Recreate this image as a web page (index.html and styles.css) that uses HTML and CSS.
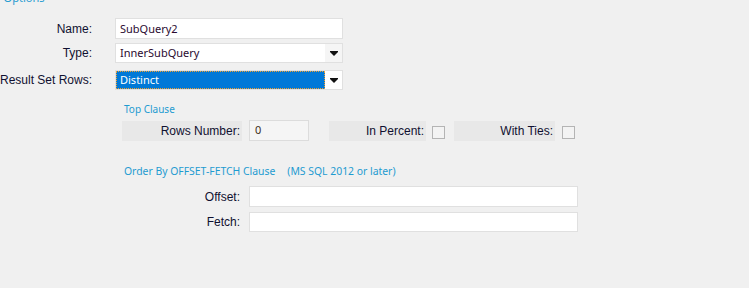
FILE: index.html
```html
<!DOCTYPE html>
<html>
<head>
<meta charset="utf-8">
<link rel="stylesheet" href="styles.css">
</head>
<body>
<div class="page">
  <div class="cut-title">Query Options</div>
  <div class="form">
    <div class="row r-name">
      <label class="lbl">Name:</label>
      <div class="field text">SubQuery2</div>
    </div>
    <div class="row r-type">
      <label class="lbl">Type:</label>
      <div class="field combo">
        <span class="value">InnerSubQuery</span>
        <span class="btn gray"><i class="arrow"></i></span>
      </div>
    </div>
    <div class="row r-rows">
      <label class="lbl">Result Set Rows:</label>
      <div class="field combo">
        <span class="value selected">Distinct</span>
        <span class="btn"><i class="arrow"></i></span>
      </div>
    </div>
  </div>

  <div class="section top-clause">
    <div class="heading">Top Clause</div>
    <div class="top-row">
      <span class="box-label w-rows">Rows Number:</span>
      <span class="num-input">0</span>
      <span class="box-label w-pct">In Percent:</span>
      <span class="check"></span>
      <span class="box-label w-ties">With Ties:</span>
      <span class="check"></span>
    </div>
  </div>

  <div class="section order-clause">
    <div class="heading wide">Order By OFFSET-FETCH Clause<span class="note">(MS SQL 2012 or later)</span></div>
    <div class="of-row r-offset">
      <label class="of-lbl">Offset:</label>
      <div class="of-input"></div>
    </div>
    <div class="of-row r-fetch">
      <label class="of-lbl">Fetch:</label>
      <div class="of-input"></div>
    </div>
  </div>
</div>
</body>
</html>
```

FILE: styles.css
```css
html, body {
  margin: 0;
  padding: 0;
  background: #f0f0f0;
  width: 749px;
  height: 288px;
  overflow: hidden;
}
body {
  font-family: "Liberation Sans", Arial, sans-serif;
  font-size: 12px;
  color: #101030;
}
.page {
  display: flex;
  flex-direction: column;
}
.cut-title {
  font-family: "Noto Sans", sans-serif;
  font-size: 11px;
  color: #1e9bd0;
  height: 14px;
  line-height: 14px;
  margin-top: -9px;
  margin-left: -31px;
  white-space: nowrap;
}
.form {
  display: flex;
  flex-direction: column;
  margin-top: 13px;
}
.row {
  display: flex;
  align-items: center;
}
.r-name { height: 21px; }
.r-type { height: 20px; margin-top: 4px; }
.r-rows { height: 20px; margin-top: 7px; }
.lbl {
  flex: 0 0 92px;
  width: 92px;
  text-align: right;
  margin-right: 23px;
  white-space: nowrap;
}
.field {
  box-sizing: border-box;
  flex: 0 0 228px;
  width: 228px;
  height: 100%;
  background: #fff;
  border: 1px solid #e0e0e0;
  font-family: "Noto Sans", sans-serif;
  font-size: 11px;
  color: #2a0a30;
}
.text {
  padding-left: 4px;
  line-height: 19px;
}
.combo {
  display: flex;
  align-items: stretch;
}
.value {
  flex: 1;
  padding-left: 4px;
  line-height: 18px;
}
.selected {
  background: #0078d7;
  color: #fff;
  outline: 1px dotted #f0a030;
  outline-offset: -1px;
  border: 1px dotted #202020;
  line-height: 16px;
  padding-left: 3px;
}
.btn {
  width: 17px;
  display: flex;
  align-items: center;
  justify-content: center;
}
.btn.gray { background: #f5f5f5; }
.arrow {
  width: 0;
  height: 0;
  border-left: 4px solid transparent;
  border-right: 4px solid transparent;
  border-top: 4px solid #111;
  position: relative;
  top: 1px;
}
.arrow::before {
  content: "";
  position: absolute;
  left: -4px;
  top: -5px;
  width: 8px;
  height: 1px;
  background: #111;
}

.section {
  display: flex;
  flex-direction: column;
  padding-left: 122px;
}
.heading {
  font-family: "Noto Sans", sans-serif;
  font-size: 10px;
  color: #1e9bd0;
  padding-left: 2px;
  height: 14px;
  line-height: 14px;
  white-space: nowrap;
}
.heading.wide { font-size: 10.4px; }
.top-clause { margin-top: 12px; }
.top-clause .heading { margin-bottom: 4px; }
.top-row {
  display: flex;
  align-items: center;
  height: 21px;
}
.box-label {
  box-sizing: border-box;
  height: 20px;
  line-height: 20px;
  background: #e8e8e8;
  text-align: right;
  padding-right: 2px;
  white-space: nowrap;
}
.w-rows { width: 120px; margin-right: 7px; }
.w-pct { width: 97px; margin-left: 20px; margin-right: 6px; }
.w-ties { width: 101px; margin-left: 9px; margin-right: 7px; }
.num-input {
  box-sizing: border-box;
  width: 60px;
  height: 21px;
  background: #f5f5f5;
  border: 1px solid #dcdcdc;
  font-family: "Noto Sans", sans-serif;
  font-size: 11px;
  padding-left: 5px;
  line-height: 17px;
  color: #403020;
}
.check {
  box-sizing: border-box;
  width: 13px;
  height: 13px;
  border: 1px solid #b4b4b4;
  background: #f3f3f3;
  margin-top: 4px;
}
.order-clause { margin-top: 23px; }
.order-clause .heading { margin-bottom: 8px; }
.note { margin-left: 12px; }
.of-row {
  display: flex;
  align-items: center;
  height: 21px;
}
.r-fetch { margin-top: 5px; height: 20px; }
.of-lbl {
  width: 118px;
  text-align: right;
  margin-right: 9px;
}
.of-input {
  box-sizing: border-box;
  width: 329px;
  height: 100%;
  background: #fff;
  border: 1px solid #e0e0e0;
}
```
